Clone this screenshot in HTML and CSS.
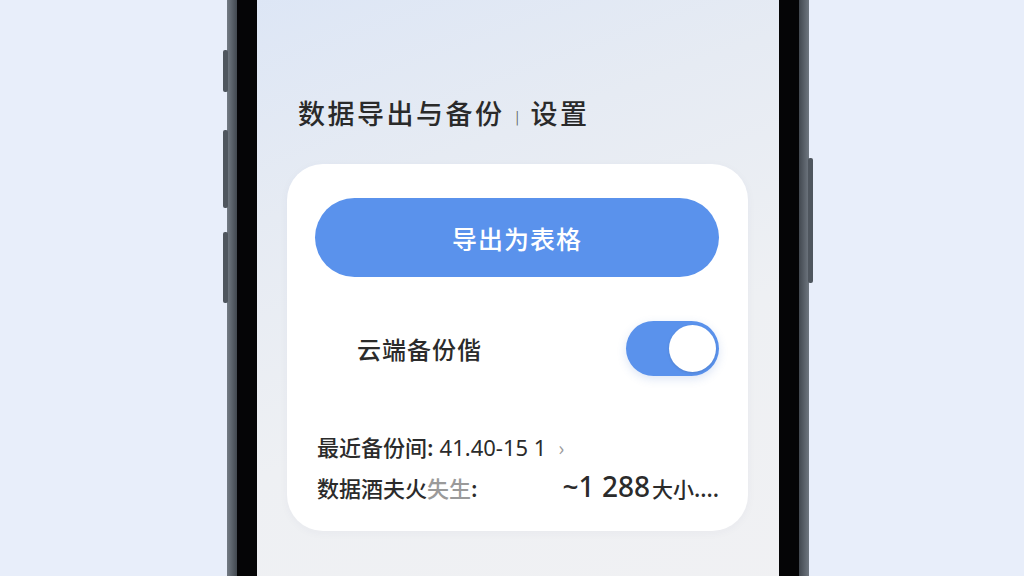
FILE: index.html
```html
<!DOCTYPE html>
<html lang="zh-CN">
<head>
    <meta charset="UTF-8">
    <meta name="viewport" content="width=device-width, initial-scale=1.0">
    <title>数据导出与备份设置</title>
    <link rel="stylesheet" href="styles.css">
</head>
<body>
    <div class="phone">
        <span class="side-btn btn-a"></span>
        <span class="side-btn btn-b"></span>
        <span class="side-btn btn-c"></span>
        <span class="side-btn btn-power"></span>
        <div class="bezel">
            <div class="screen">
                <h1 class="title">数据导出与备份<span class="sep">|</span>设置</h1>

                <div class="card">
                    <button class="export-btn">导出为表格</button>

                    <div class="toggle-row">
                        <span class="toggle-label">云端备份偕</span>
                        <div class="toggle on"><span class="knob"></span></div>
                    </div>

                    <div class="info">
                        <div class="info-row">
                            <span class="label">最近备份间:</span>
                            <span class="num">41.40-15 1</span>
                            <span class="chev">›</span>
                        </div>
                        <div class="info-row spread">
                            <span class="label">数据酒夫火<span class="faded">失生</span>:</span>
                            <span class="size"><span class="num big">~1 288</span>大小....</span>
                        </div>
                    </div>
                </div>
            </div>
        </div>
    </div>
</body>
</html>
```

FILE: styles.css
```css
body {
    margin: 0;
    height: 576px;
    overflow: hidden;
    background-color: #e8eefa;
    font-family: "Noto Sans CJK SC", "Noto Sans", sans-serif;
    color: #2b2b2b;
}

/* phone mockup */
.phone {
    position: relative;
    width: 562px;
    height: 760px;
    margin: -80px 0 0 227px;
    padding: 10px;
    border-radius: 78px;
    background: linear-gradient(90deg, #737b84 0%, #3a4047 2%, #24282d 50%, #3a4047 98%, #6f7780 100%);
}
.side-btn {
    position: absolute;
    width: 5px;
    border-radius: 2px;
    background: #4f565e;
}
.btn-a { left: -4px; top: 130px; height: 42px; }
.btn-b { left: -4px; top: 210px; height: 78px; }
.btn-c { left: -4px; top: 312px; height: 71px; }
.btn-power { right: -4px; top: 238px; height: 125px; }

.bezel {
    height: 100%;
    box-sizing: border-box;
    padding: 20px;
    border-radius: 68px;
    background: #050506;
}
.screen {
    height: 100%;
    border-radius: 50px;
    overflow: hidden;
    background: linear-gradient(160deg, #dbe5f6 0%, #e6ebf3 30%, #eef0f3 58%, #f1f1f3 100%);
}

.title {
    margin: 145px 0 0 41px;
    font-size: 27px;
    line-height: 36px;
    font-weight: 500;
    letter-spacing: 2.5px;
    color: #2a2a2a;
}
.sep {
    display: inline-block;
    margin: 0 9px 0 11px;
    font-size: 13px;
    font-weight: 400;
    color: #555;
    vertical-align: 2px;
}

.card {
    margin: 29px 31px 0 30px;
    padding: 34px 29px 25px 28px;
    border-radius: 36px;
    background: #fff;
    box-shadow: 0 2px 10px rgba(40, 60, 90, 0.04);
}

.export-btn {
    display: block;
    width: 100%;
    height: 79px;
    border: none;
    border-radius: 40px;
    background: #5a92ec;
    color: #fff;
    font-family: inherit;
    font-size: 25px;
    font-weight: 500;
    letter-spacing: 1px;
    cursor: pointer;
}

.toggle-row {
    display: flex;
    align-items: center;
    justify-content: space-between;
    margin-top: 44px;
    padding-left: 42px;
}
.toggle-label {
    font-size: 24px;
    font-weight: 500;
    letter-spacing: 1px;
}
.toggle {
    position: relative;
    width: 93px;
    height: 55px;
    border-radius: 28px;
    background: #5a92ec;
    box-shadow: 0 3px 10px rgba(60, 110, 200, 0.18);
}
.knob {
    position: absolute;
    top: 4px;
    right: 3px;
    width: 47px;
    height: 47px;
    border-radius: 50%;
    background: #fff;
    box-shadow: 0 1px 3px rgba(0, 0, 0, 0.12);
}

.info {
    margin-top: 50px;
    padding-left: 2px;
}
.info-row {
    display: flex;
    align-items: baseline;
    height: 40px;
    font-size: 22px;
    line-height: 40px;
    font-weight: 500;
}
.info-row.spread {
    justify-content: space-between;
}
.num {
    margin-left: 6px;
    font-family: "Noto Sans", "Liberation Sans", sans-serif;
    font-size: 22px;
    font-weight: 400;
}
.chev {
    margin-left: 12px;
    color: #9a9a9a;
    font-size: 20px;
    font-weight: 400;
}
.faded {
    color: #9a9a9a;
}
.size {
    font-size: 21px;
}
.num.big {
    margin: 0 2px 0 0;
    font-size: 28px;
    font-weight: 500;
}
```
